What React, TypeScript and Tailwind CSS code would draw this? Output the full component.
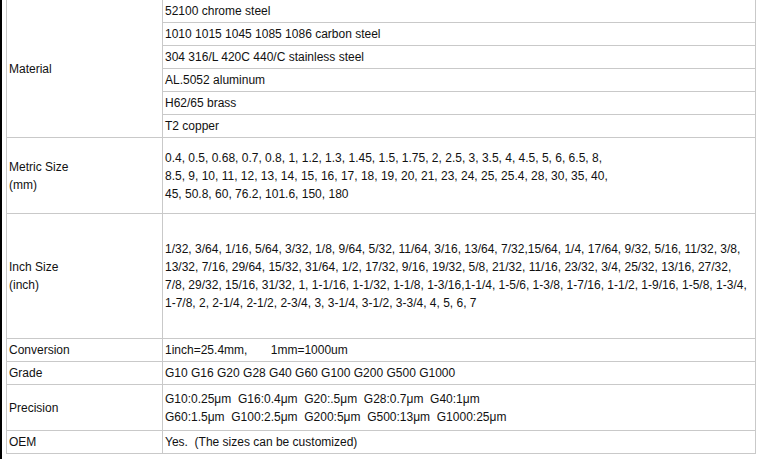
const materials = [
  "52100 chrome steel",
  "1010 1015 1045 1085 1086 carbon steel",
  "304 316/L 420C 440/C stainless steel",
  "AL.5052 aluminum",
  "H62/65 brass",
  "T2 copper",
];

const metricLines = [
  "0.4, 0.5, 0.68, 0.7, 0.8, 1, 1.2, 1.3, 1.45, 1.5, 1.75, 2, 2.5, 3, 3.5, 4, 4.5, 5, 6, 6.5, 8,",
  "8.5, 9, 10, 11, 12, 13, 14, 15, 16, 17, 18, 19, 20, 21, 23, 24, 25, 25.4, 28, 30, 35, 40,",
  "45, 50.8, 60, 76.2, 101.6, 150, 180",
];

const inchLines = [
  "1/32, 3/64, 1/16, 5/64, 3/32, 1/8, 9/64, 5/32, 11/64, 3/16, 13/64, 7/32,15/64, 1/4, 17/64, 9/32, 5/16, 11/32, 3/8,",
  "13/32, 7/16, 29/64, 15/32, 31/64, 1/2, 17/32, 9/16, 19/32, 5/8, 21/32, 11/16, 23/32, 3/4, 25/32, 13/16, 27/32,",
  "7/8, 29/32, 15/16, 31/32, 1, 1-1/16, 1-1/32, 1-1/8, 1-3/16,1-1/4, 1-5/6, 1-3/8, 1-7/16, 1-1/2, 1-9/16, 1-5/8, 1-3/4,",
  "1-7/8, 2, 2-1/4, 2-1/2, 2-3/4, 3, 3-1/4, 3-1/2, 3-3/4, 4, 5, 6, 7",
];

const cell = "border border-[#c9c9c9] px-[2px] align-middle";

function Lines({ lines }: { lines: string[] }) {
  return (
    <>
      {lines.map((l) => (
        <div key={l} className="whitespace-pre">
          {l}
        </div>
      ))}
    </>
  );
}

export default function App() {
  return (
    <div
      className="flex h-[459px] w-[762px] overflow-hidden bg-white text-[12px] leading-[18px] text-[#111]"
      style={{ fontFamily: '"Liberation Sans", Arial, sans-serif' }}
    >
      <div className="w-[2px] shrink-0 bg-black" />
      <div className="pl-[4px]">
        <table className="-mt-px w-[750px] table-fixed border-collapse">
          <colgroup>
            <col className="w-[156px]" />
            <col />
          </colgroup>
          <tbody>
            {materials.map((m, i) => (
              <tr key={m} className="h-[23px]">
                {i === 0 && (
                  <td rowSpan={6} className={cell}>
                    Material
                  </td>
                )}
                <td className={cell}>{m}</td>
              </tr>
            ))}
            <tr className="h-[76px]">
              <td className={cell}>
                <Lines lines={["Metric Size", "(mm)"]} />
              </td>
              <td className={cell}>
                <Lines lines={metricLines} />
              </td>
            </tr>
            <tr className="h-[125px]">
              <td className={cell}>
                <Lines lines={["Inch Size", "(inch)"]} />
              </td>
              <td className={cell}>
                <Lines lines={inchLines} />
              </td>
            </tr>
            <tr className="h-[23px]">
              <td className={cell}>Conversion</td>
              <td className={`${cell} whitespace-pre`}>1inch=25.4mm,       1mm=1000um</td>
            </tr>
            <tr className="h-[23px]">
              <td className={cell}>Grade</td>
              <td className={cell}>G10 G16 G20 G28 G40 G60 G100 G200 G500 G1000</td>
            </tr>
            <tr className="h-[46px]">
              <td className={cell}>Precision</td>
              <td className={cell}>
                <Lines
                  lines={[
                    "G10:0.25μm  G16:0.4μm  G20:.5μm  G28:0.7μm  G40:1μm",
                    "G60:1.5μm  G100:2.5μm  G200:5μm  G500:13μm  G1000:25μm",
                  ]}
                />
              </td>
            </tr>
            <tr className="h-[23px]">
              <td className={cell}>OEM</td>
              <td className={`${cell} whitespace-pre`}>Yes.  (The sizes can be customized)</td>
            </tr>
          </tbody>
        </table>
      </div>
    </div>
  );
}
